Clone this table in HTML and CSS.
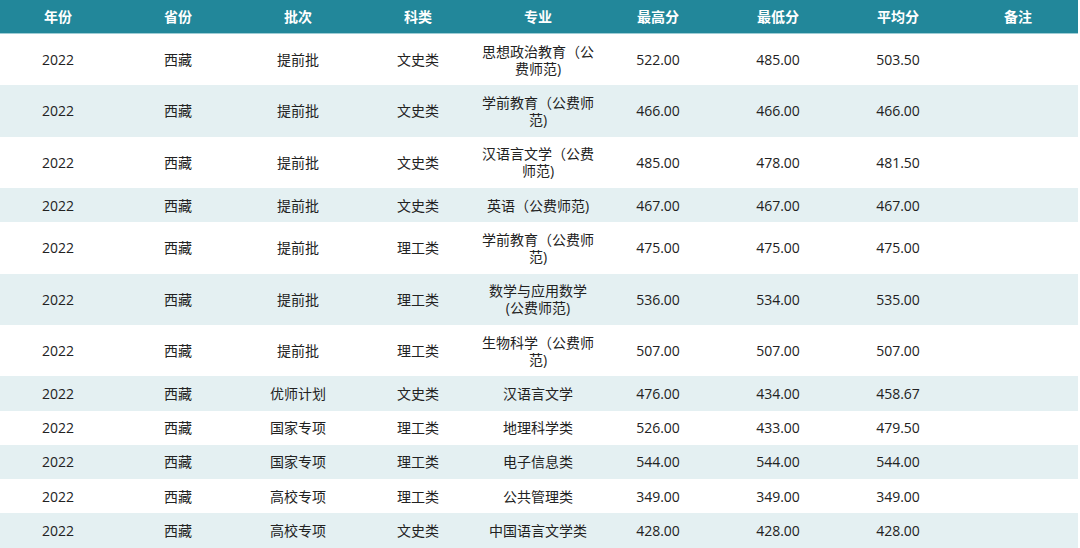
FILE: index.html
```html
<!DOCTYPE html>
<html lang="zh-CN">
<head>
<meta charset="utf-8">
<title>录取分数</title>
<link rel="stylesheet" href="styles.css">
</head>
<body>
<div class="wrap">
<table class="scores">
<thead>
<tr><th>年份</th><th>省份</th><th>批次</th><th>科类</th><th>专业</th><th>最高分</th><th>最低分</th><th>平均分</th><th>备注</th></tr>
</thead>
<tbody>
<tr><td>2022</td><td>西藏</td><td>提前批</td><td>文史类</td><td>思想政治教育（公费师范)</td><td>522.00</td><td>485.00</td><td>503.50</td><td></td></tr>
<tr><td>2022</td><td>西藏</td><td>提前批</td><td>文史类</td><td>学前教育（公费师范)</td><td>466.00</td><td>466.00</td><td>466.00</td><td></td></tr>
<tr><td>2022</td><td>西藏</td><td>提前批</td><td>文史类</td><td>汉语言文学（公费师范)</td><td>485.00</td><td>478.00</td><td>481.50</td><td></td></tr>
<tr><td>2022</td><td>西藏</td><td>提前批</td><td>文史类</td><td>英语（公费师范)</td><td>467.00</td><td>467.00</td><td>467.00</td><td></td></tr>
<tr><td>2022</td><td>西藏</td><td>提前批</td><td>理工类</td><td>学前教育（公费师范)</td><td>475.00</td><td>475.00</td><td>475.00</td><td></td></tr>
<tr><td>2022</td><td>西藏</td><td>提前批</td><td>理工类</td><td>数学与应用数学(公费师范)</td><td>536.00</td><td>534.00</td><td>535.00</td><td></td></tr>
<tr><td>2022</td><td>西藏</td><td>提前批</td><td>理工类</td><td>生物科学（公费师范)</td><td>507.00</td><td>507.00</td><td>507.00</td><td></td></tr>
<tr><td>2022</td><td>西藏</td><td>优师计划</td><td>文史类</td><td>汉语言文学</td><td>476.00</td><td>434.00</td><td>458.67</td><td></td></tr>
<tr><td>2022</td><td>西藏</td><td>国家专项</td><td>理工类</td><td>地理科学类</td><td>526.00</td><td>433.00</td><td>479.50</td><td></td></tr>
<tr><td>2022</td><td>西藏</td><td>国家专项</td><td>理工类</td><td>电子信息类</td><td>544.00</td><td>544.00</td><td>544.00</td><td></td></tr>
<tr><td>2022</td><td>西藏</td><td>高校专项</td><td>理工类</td><td>公共管理类</td><td>349.00</td><td>349.00</td><td>349.00</td><td></td></tr>
<tr><td>2022</td><td>西藏</td><td>高校专项</td><td>文史类</td><td>中国语言文学类</td><td>428.00</td><td>428.00</td><td>428.00</td><td></td></tr>
</tbody>
</table>
</div>
</body>
</html>
```

FILE: styles.css
```css
html, body {
  margin: 0;
  padding: 0;
  background: #ffffff;
  overflow: hidden;
}
.wrap {
  margin-left: -2px;
  width: 1080px;
}
.scores {
  width: 1080px;
  border-collapse: collapse;
  table-layout: fixed;
  font-family: "Open Sans", "Noto Sans CJK SC", sans-serif;
  font-size: 14px;
  color: #222222;
}
.scores th {
  background: #22879a;
  color: #ffffff;
  font-weight: 700;
  height: 33px;
  padding: 0 4px;
  line-height: 17px;
  text-align: center;
  vertical-align: middle;
  border-bottom: 1px solid #9fcdd5;
}
.scores td {
  padding: 8.67px 4px;
  line-height: 17px;
  text-align: center;
  vertical-align: middle;
  word-break: break-all;
}
.scores tbody tr:nth-child(even) td {
  background: #e4f0f2;
}
```
